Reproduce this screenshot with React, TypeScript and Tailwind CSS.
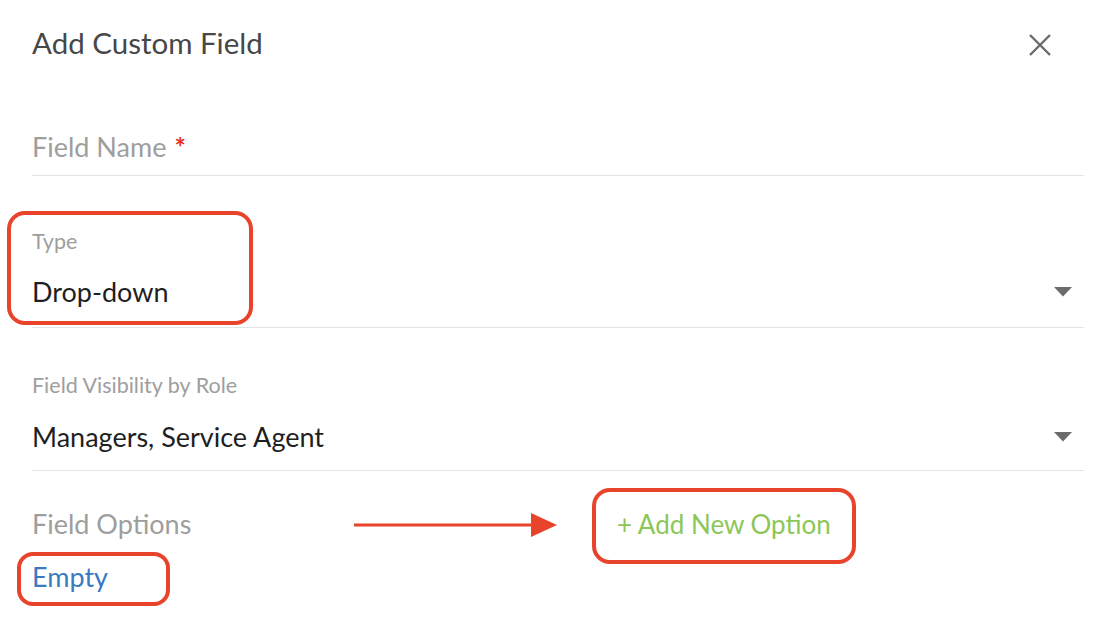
import React from 'react'

const Caret = () => (
  <svg width="18" height="10" viewBox="0 0 18 10" className="shrink-0 mr-[12px]">
    <path d="M0 0 L18 0 L9 9.5 Z" fill="#6b6b6b" />
  </svg>
)

const App = () => {
  return (
    <div className="w-[1118px] h-[640px] bg-white pl-8 pr-[34px] overflow-hidden" style={{ fontFamily: 'Lato, "Noto Sans", sans-serif' }}>
      {/* Header */}
      <div className="flex items-center justify-between pt-[25px]">
        <h2 className="text-[29.5px] leading-[36px] text-[#474747]">Add Custom Field</h2>
        <svg width="22" height="22" viewBox="0 0 22 22" className="mr-[33px] mt-[3px]">
          <path d="M1 1 L21 21 M21 1 L1 21" stroke="#6b6b6b" strokeWidth="2.4" />
        </svg>
      </div>

      {/* Field Name */}
      <div className="mt-[70px] pb-[12px] border-b border-[#e3e3e3]">
        <span className="text-[27px] leading-[32px] text-[#9e9e9e]">
          Field Name<span className="ml-[8px] text-[#e53222] text-[27px] font-bold">*</span>
        </span>
      </div>

      {/* Type */}
      <div className="pt-[53px] pb-[19px] border-b border-[#e3e3e3]">
        <div className="relative">
          <span className="absolute -left-[25px] -top-[18px] w-[246px] h-[114px] rounded-[18px] border-4 border-[#e8432b]" />
          <div className="text-[21.5px] leading-[24px] text-[#9e9e9e]">Type</div>
          <div className="mt-[23px] flex items-center justify-between">
            <span className="text-[27px] leading-[32px] text-[#1f1f1f]">Drop-down</span>
            <Caret />
          </div>
        </div>
      </div>

      {/* Field Visibility */}
      <div className="pt-[45px] pb-[17px] border-b border-[#e3e3e3]">
        <div className="text-[21.5px] leading-[24px] text-[#9e9e9e]">Field Visibility by Role</div>
        <div className="mt-[24px] flex items-center justify-between">
          <span className="text-[27px] leading-[32px] text-[#1f1f1f]">Managers, Service Agent</span>
          <Caret />
        </div>
      </div>

      {/* Field Options */}
      <div className="mt-[37px] flex items-center">
        <span className="w-[322px] text-[27px] leading-[32px] text-[#9e9e9e]">Field Options</span>
        <svg width="203" height="26" viewBox="0 0 203 26" className="mt-[2px]">
          <path d="M0 13 L178 13" stroke="#e8432b" strokeWidth="3.2" />
          <path d="M177 1 L203 13 L177 25 Z" fill="#e8432b" />
        </svg>
        <span className="relative ml-[60px] text-[26px] leading-[32px] text-[#8cc657]">
          <span className="absolute -left-[25px] -top-[20px] w-[264px] h-[76px] rounded-[18px] border-4 border-[#e8432b]" />
          + Add New Option
        </span>
      </div>

      <div className="mt-[21px]">
        <span className="relative inline-block text-[27px] leading-[32px] text-[#3a7bbf]">
          <span className="absolute -left-[15px] -top-[9px] w-[153px] h-[54px] rounded-[16px] border-4 border-[#e8432b]" />
          Empty
        </span>
      </div>
    </div>
  )
}

export default App
